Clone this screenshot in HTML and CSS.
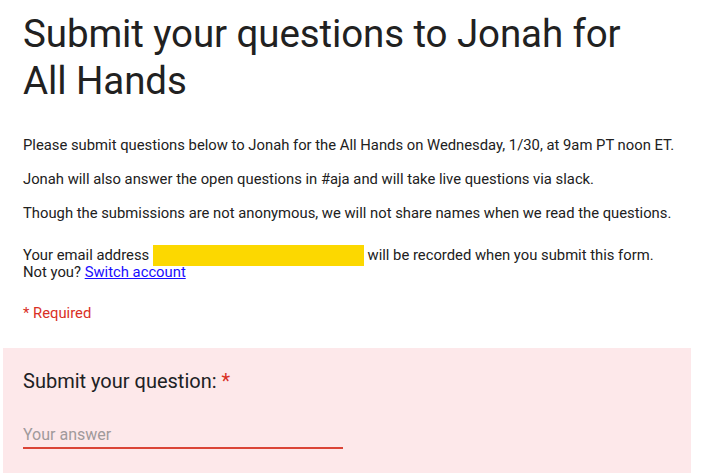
FILE: index.html
```html
<!DOCTYPE html>
<html>
    <head>
        <meta charset="UTF-8">
        <title>Submit your questions to Jonah for All Hands</title>
        <link rel="stylesheet" href="styles.css">
    </head>
    <body>
        <div class="header">
            <h1>Submit your questions to Jonah for All Hands</h1>
            <p>Please submit questions below to Jonah for the All Hands on Wednesday, 1/30, at 9am PT noon ET.</p>
            <p>Jonah will also answer the open questions in #aja and will take live questions via slack.</p>
            <p>Though the submissions are not anonymous, we will not share names when we read the questions.</p>
            <div class="email">
                Your email address <span class="redact"></span> will be recorded when you submit this form.<br />
                Not you? <a href="#">Switch account</a>
            </div>
            <div class="required">* Required</div>
        </div>
        <div class="question">
            <div class="label">Submit your question: <span class="star">*</span></div>
            <input type="text" class="answer" placeholder="Your answer" />
        </div>
    </body>
</html>
```

FILE: styles.css
```css
html, body { margin: 0; padding: 0; background: #fff; font-family: Roboto, "Liberation Sans", sans-serif; color: #212121; }
.header { padding: 0 23px; }
h1 { font-size: 38.5px; font-weight: 400; line-height: 47px; margin: 10px 0 32px 0; width: 640px; letter-spacing: -0.1px; }
p { font-size: 14.8px; margin: 0 0 15px 0; line-height: 19px; }
.email { font-size: 14.8px; line-height: 17px; margin-top: 24px; }
.redact { display: inline-block; width: 211px; height: 21px; margin: -3px 0; background: #fcd800; vertical-align: -3px; }
a { color: #1a0dff; }
.required { color: #d93025; font-size: 14.8px; margin-top: 23px; }
.question { background: #fde8ea; margin: 26px 19px 0 3px; padding: 21px 20px 20px 20px; height: 120px; }
.label { font-size: 20px; color: #202124; }
.star { color: #d93025; }
.answer { display: block; margin-top: 28px; width: 320px; border: 0; border-bottom: 2px solid #db4437; background: transparent; font-family: Roboto, sans-serif; font-size: 16px; padding: 4px 0 3px 0; outline: none; }
.answer::placeholder { color: #a09a9b; }
```
